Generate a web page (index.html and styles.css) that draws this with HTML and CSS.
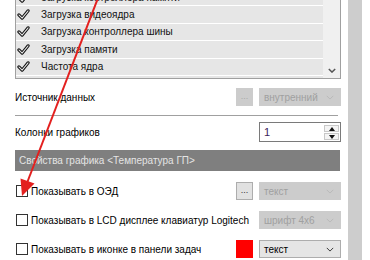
FILE: index.html
```html
<!DOCTYPE html>
<html lang="ru">
<head>
<meta charset="UTF-8">
<title>Настройки мониторинга</title>
<link rel="stylesheet" href="styles.css">
</head>
<body>

<div class="page">
  <div class="main">
    <!-- список источников -->
    <div class="list">
      <div class="rows">
        <div class="row"><svg class="tick" viewBox="0 0 14 12"><path d="M2 6.5 L5.5 10 L12 2"/><path class="in" d="M2 6.5 L5.5 10 L12 2"/></svg>Загрузка контроллера памяти</div>
        <div class="row"><svg class="tick" viewBox="0 0 14 12"><path d="M2 6.5 L5.5 10 L12 2"/><path class="in" d="M2 6.5 L5.5 10 L12 2"/></svg>Загрузка видеоядра</div>
        <div class="row"><svg class="tick" viewBox="0 0 14 12"><path d="M2 6.5 L5.5 10 L12 2"/><path class="in" d="M2 6.5 L5.5 10 L12 2"/></svg>Загрузка контроллера шины</div>
        <div class="row"><svg class="tick" viewBox="0 0 14 12"><path d="M2 6.5 L5.5 10 L12 2"/><path class="in" d="M2 6.5 L5.5 10 L12 2"/></svg>Загрузка памяти</div>
        <div class="row"><svg class="tick" viewBox="0 0 14 12"><path d="M2 6.5 L5.5 10 L12 2"/><path class="in" d="M2 6.5 L5.5 10 L12 2"/></svg>Частота ядра</div>
        <div class="row"><svg class="tick" viewBox="0 0 14 12"><path d="M2 6.5 L5.5 10 L12 2"/><path class="in" d="M2 6.5 L5.5 10 L12 2"/></svg>Частота памяти</div>
      </div>
      <div class="vscroll">
        <svg class="chev" viewBox="0 0 10 6"><path d="M1 1 L5 5 L9 1"/></svg>
      </div>
    </div>

    <div class="field">
      <span class="label">Источник данных</span>
      <span class="dots off">...</span>
      <span class="select off">внутренний<svg class="chev" viewBox="0 0 10 6"><path d="M1 1 L5 5 L9 1"/></svg></span>
    </div>

    <div class="sep"></div>

    <div class="field spin-field">
      <span class="label">Колонки графиков</span>
      <span class="spin">
        <span class="spin-val">1</span>
        <span class="spin-btns">
          <span class="spin-btn"><svg viewBox="0 0 6 4"><path d="M0 4 L3 0 L6 4Z"/></svg></span>
          <span class="spin-btn"><svg viewBox="0 0 6 4"><path d="M0 0 L3 4 L6 0Z"/></svg></span>
        </span>
      </span>
    </div>

    <div class="section">Свойства графика &lt;Температура ГП&gt;</div>

    <div class="opt">
      <span class="box"></span>
      <span class="label">Показывать в ОЭД</span>
      <span class="dots">...</span>
      <span class="select off">текст<svg class="chev" viewBox="0 0 10 6"><path d="M1 1 L5 5 L9 1"/></svg></span>
    </div>
    <div class="opt">
      <span class="box"></span>
      <span class="label">Показывать в LCD дисплее клавиатур Logitech</span>
      <span class="select off">шрифт 4x6<svg class="chev" viewBox="0 0 10 6"><path d="M1 1 L5 5 L9 1"/></svg></span>
    </div>
    <div class="opt">
      <span class="box"></span>
      <span class="label">Показывать в иконке в панели задач</span>
      <span class="swatch"></span>
      <span class="select">текст<svg class="chev" viewBox="0 0 10 6"><path d="M1 1 L5 5 L9 1"/></svg></span>
    </div>
  </div>

  <div class="side"></div>
</div>

<!-- красная стрелка поверх скриншота -->
<svg class="arrow" viewBox="0 0 370 260" width="370" height="260">
  <line x1="98" y1="-2" x2="27" y2="183"/>
  <polygon points="22,196 34.5,183.5 20.5,178.5"/>
</svg>

</body>
</html>
```

FILE: styles.css
```css
body {
  margin: 0;
  background: #fff;
  font-family: "Liberation Sans", Arial, sans-serif;
  font-size: 10px;
  color: #000;
  overflow: hidden;
}

.page {
  display: flex;
  height: 260px;
}

.main {
  width: 326px;
  margin-left: 15px;
  display: flex;
  flex-direction: column;
}

.side {
  width: 14px;
  margin-left: 7px;
  background: #cdcdcd;
  border-right: 6px solid #fff;
}

/* список */
.list {
  display: flex;
  height: 91px;
  margin-top: -12px;
  border: 1px solid #a0a0a0;
  box-sizing: border-box;
  flex-shrink: 0;
}

.rows {
  flex: 1;
  overflow: hidden;
}

.row {
  height: 16.4px;
  border-bottom: 1px solid #fff;
  background: #e6e6e6;
  display: flex;
  align-items: center;
  white-space: nowrap;
  color: #111;
}

.tick {
  width: 13px;
  height: 11px;
  margin: 0 11px 0 1px;
  flex-shrink: 0;
  fill: none;
  stroke: #111;
  stroke-width: 3.4;
  stroke-linecap: round;
  stroke-linejoin: round;
}

.tick .in {
  stroke: #e6e6e6;
  stroke-width: 1.1;
}

.vscroll {
  width: 17px;
  background: #f0f0f0;
  display: flex;
  align-items: flex-end;
  justify-content: center;
  padding-bottom: 5px;
  box-sizing: border-box;
}

.chev {
  width: 8px;
  height: 5px;
  flex-shrink: 0;
  fill: none;
  stroke: #555;
  stroke-width: 1.8;
}

/* поля */
.field,
.opt {
  display: flex;
  align-items: center;
  height: 18px;
  flex-shrink: 0;
}

.field {
  margin-top: 9px;
}

.label {
  flex: 1;
  white-space: nowrap;
}

.dots {
  width: 17px;
  height: 18px;
  flex-shrink: 0;
  box-sizing: border-box;
  background: #e1e1e1;
  border: 1px solid #adadad;
  font-size: 9px;
  line-height: 14px;
  text-align: center;
  color: #333;
  margin-right: 6px;
}

.dots.off {
  background: #cccccc;
  border-color: #cccccc;
  color: #a8a8a8;
}

.select {
  width: 82px;
  height: 18px;
  flex-shrink: 0;
  box-sizing: border-box;
  background: #e5e5e5;
  border: 1px solid #adadad;
  display: flex;
  align-items: center;
  justify-content: space-between;
  padding: 0 6px 0 4px;
  white-space: nowrap;
}

.select .chev {
  stroke: #333;
  stroke-width: 1.2;
}

.select.off {
  background: #cccccc;
  border-color: #cccccc;
  color: #a0a0a0;
}

.select.off .chev {
  stroke: #b8b8b8;
}

.sep {
  height: 1px;
  background: #a0a0a0;
  margin: 9px 3px 0 0;
  flex-shrink: 0;
}

.spin-field {
  height: 20px;
  margin-top: 6px;
}

.spin {
  width: 82px;
  height: 20px;
  flex-shrink: 0;
  box-sizing: border-box;
  border: 1px solid #7a7a7a;
  background: #fff;
  display: flex;
}

.spin-val {
  flex: 1;
  padding-left: 4px;
  color: #3d1d5c;
  font-size: 11px;
  line-height: 18px;
}

.spin-btns {
  width: 15px;
  display: flex;
  flex-direction: column;
  gap: 1px;
  padding: 2px 1px 1px 0;
}

.spin-btn {
  flex: 1;
  border: 1px solid #c8c8c8;
  background: #f4f4f4;
  display: flex;
  align-items: center;
  justify-content: center;
}

.spin-btn svg {
  width: 6px;
  height: 4px;
  fill: #111;
}

.section {
  margin-top: 8px;
  height: 21px;
  background: #7f7f7f;
  color: #e4e4e4;
  padding-left: 4px;
  line-height: 21px;
  flex-shrink: 0;
  margin-right: 1px;
}

.opt {
  margin-top: 11px;
}

.box {
  width: 12px;
  height: 12px;
  flex-shrink: 0;
  box-sizing: border-box;
  border: 1px solid #333;
  background: #fff;
  margin: 0 3px 0 1px;
}

.swatch {
  width: 17px;
  height: 18px;
  flex-shrink: 0;
  background: #ff0000;
  margin-right: 6px;
}

.arrow {
  position: absolute;
  left: 0;
  top: 0;
  pointer-events: none;
}

.arrow line {
  stroke: #e3201f;
  stroke-width: 2;
}

.arrow polygon {
  fill: #e3201f;
}
```
